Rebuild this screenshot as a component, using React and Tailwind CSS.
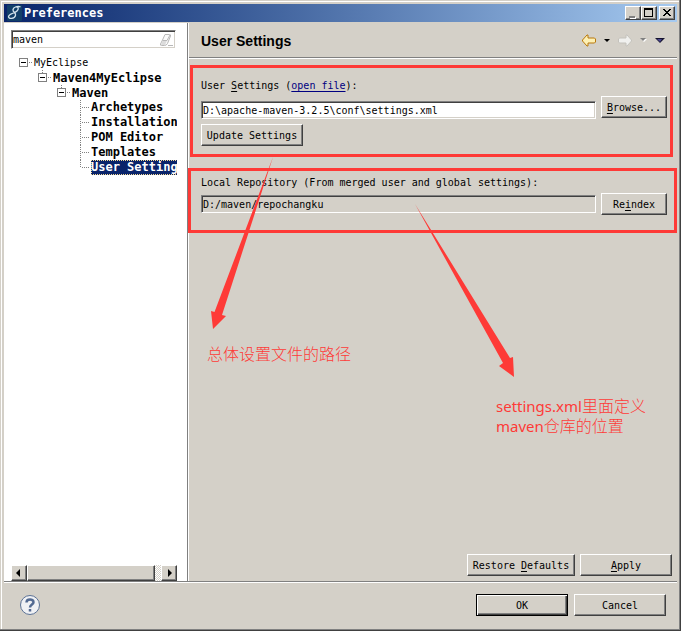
import { useState } from "react";

const leaves = ["Archetypes", "Installation", "POM Editor", "Templates", "User Setting"];

const raised =
    "border border-t-white border-l-white border-r-[#404040] border-b-[#404040] bg-[#d4d0c8] shadow-[inset_-1px_-1px_0_#808080]";
const sunken =
    "border border-t-[#808080] border-l-[#808080] border-r-white border-b-white shadow-[inset_1px_1px_0_#404040,inset_-1px_-1px_0_#d4d0c8]";

function Button({ className = "", children }) {
    return (
        <button type="button" className={`${raised} flex h-[22px] items-center justify-center whitespace-nowrap ${className}`}>
            <span>{children}</span>
        </button>
    );
}

function Expander({ open, root, label, onClick }) {
    return (
        <button type="button" aria-label={label} onClick={onClick} className="h-[15px] w-[15px] shrink-0">
            <svg width="15" height="15" shapeRendering="crispEdges" fill="none">
                {!root && <path d="M4.5 0v3" stroke="#808080" strokeDasharray="1 1" />}
                <rect x="0.5" y="3.5" width="8" height="8" stroke="#808080" fill="#fff" />
                <path d="M2 7.5h5" stroke="#000" />
                {!open && <path d="M4.5 5v5" stroke="#000" />}
                <path d="M10 7.5h4" stroke="#808080" strokeDasharray="1 1" />
            </svg>
        </button>
    );
}

function Branch({ label, root, children }) {
    const [open, setOpen] = useState(true);

    return (
        <li>
            <div className="flex h-[15px] items-center">
                <Expander open={open} root={root} label={`Toggle ${label}`} onClick={() => setOpen(!open)} />
                <span className={root ? "text-[10px] font-normal" : ""}>{label}</span>
            </div>
            {open && <ul className="ml-[19px]">{children}</ul>}
        </li>
    );
}

function Leaf({ label, last, selected, onSelect }) {
    return (
        <li className="flex h-[15px] items-center">
            <svg width="15" height="15" className="shrink-0" shapeRendering="crispEdges" fill="none" stroke="#808080">
                <path d={last ? "M4.5 0v8" : "M4.5 0v15"} strokeDasharray="1 1" />
                <path d="M6 7.5h7" strokeDasharray="1 1" />
            </svg>
            <button
                type="button"
                onClick={onSelect}
                className={`h-[15px] leading-[15px] ${
                    selected ? "bg-[#0a246a] text-white outline-1 -outline-offset-1 outline-dotted outline-[#f5db95]" : ""
                }`}
            >
                {label}
            </button>
        </li>
    );
}

function TitleBar() {
    return (
        <header className="flex h-[18px] items-center bg-linear-to-r from-[#0a246a] to-[#a6caf0] pr-[2px] pl-[3px]">
            <svg width="15" height="16" viewBox="0 0 15 16" fill="none">
                <rect width="15" height="16" rx="1" fill="#123f68" />
                <path
                    d="M13.500 2C11 0.500 6.500 2 6 4.500C5.500 7.500 9.500 7.500 8.500 10.500C7.500 14 1.500 14.500 1.500 11.500C2 8.500 7.500 8.500 10 6C12 4 11.500 1.500 9 2"
                    stroke="#d3e2ec"
                    strokeWidth="1.300"
                />
            </svg>
            <h1 className="ml-[2px] flex-1 text-xs font-bold text-white">Preferences</h1>
            <button type="button" aria-label="Minimize" className={`${raised} h-[14px] w-4`}>
                <svg width="14" height="12" shapeRendering="crispEdges">
                    <path d="M4 10h6v2H4z" fill="#fff" />
                    <path d="M3 9h6v2H3z" fill="#808080" />
                </svg>
            </button>
            <button type="button" aria-label="Maximize" className={`${raised} h-[14px] w-4`}>
                <svg width="14" height="12" shapeRendering="crispEdges" fill="none" stroke="#000">
                    <path d="M2.500 1.500h8v8h-8zM2.500 2.500h8" />
                </svg>
            </button>
            <button type="button" aria-label="Close" className={`${raised} ml-[2px] h-[14px] w-4`}>
                <svg width="14" height="12" shapeRendering="crispEdges" stroke="#000">
                    <path d="M3 2l7 7M4 2l7 7M10 2l-7 7M11 2l-7 7" />
                </svg>
            </button>
        </header>
    );
}

function Sidebar() {
    const [filter, setFilter] = useState("maven");
    const [selected, setSelected] = useState("User Setting");

    return (
        <aside className="flex w-[184px] shrink-0 flex-col border-r border-[#808080] bg-white pt-[7px] pr-[10px] pl-[7px]">
            <div className={`flex h-[19px] w-[165px] items-center bg-white pr-[2px] pl-px ${sunken}`}>
                <input
                    aria-label="Filter"
                    value={filter}
                    onChange={(e) => setFilter(e.target.value)}
                    className="w-0 flex-1 outline-none"
                />
                <button type="button" aria-label="Clear filter">
                    <svg width="14" height="14" fill="none" stroke="#b8b8b8">
                        <path d="M6 1.500h4.500q1.500 0 1 1.500L8.500 10.500q-1 2-3 2h-3q-1.500 0-1-1.500L3.500 7z" fill="#fafafa" />
                        <path d="M3.500 7.500h4.500l-2 4.500H2z" fill="#dcdcdc" stroke="none" />
                        <path d="M3.500 7.500h4.500l3-5.500M9 12.500h5" />
                    </svg>
                </button>
            </div>
            <nav className="mt-[6px] flex-1 overflow-hidden pl-2 text-xs font-bold whitespace-nowrap">
                <ul>
                    <Branch label="MyEclipse" root>
                        <Branch label="Maven4MyEclipse">
                            <Branch label="Maven">
                                {leaves.map((label, i) => (
                                    <Leaf
                                        key={label}
                                        label={label}
                                        last={i === leaves.length - 1}
                                        selected={selected === label}
                                        onSelect={() => setSelected(label)}
                                    />
                                ))}
                            </Branch>
                        </Branch>
                    </Branch>
                </ul>
            </nav>
            <div className="flex h-4 bg-[repeating-conic-gradient(#d4d0c8_0_25%,#fff_0_50%)] bg-[length:2px_2px]">
                <button type="button" aria-label="Scroll left" className={`${raised} w-4`}>
                    <svg width="14" height="14">
                        <path d="M8 3v8L4 7z" />
                    </svg>
                </button>
                <div className={`${raised} w-32`} />
                <button type="button" aria-label="Scroll right" className={`${raised} ml-auto w-4`}>
                    <svg width="14" height="14">
                        <path d="M6 3v8l4-4z" />
                    </svg>
                </button>
            </div>
        </aside>
    );
}

function PageHeader() {
    return (
        <div className="flex h-[36px] items-center border-b border-white pr-3 pl-3 shadow-[inset_0_-1px_0_#808080]">
            <h2 className="flex-1 font-['Liberation_Sans'] text-sm font-bold">User Settings</h2>
            <button type="button" aria-label="Back">
                <svg width="14" height="13" fill="#fdf0b4" stroke="#b8780c" strokeLinejoin="round">
                    <path d="M6 1v3h6.500l1 1v3l-1 1H6v3h-1L0.500 7V6L5 1z" />
                </svg>
            </button>
            <button type="button" aria-label="Back history" className="ml-2">
                <svg width="6" height="4">
                    <path d="M0 0h6L3 3z" />
                </svg>
            </button>
            <button type="button" aria-label="Forward" className="ml-2">
                <svg width="14" height="13" fill="#f0f0ee" stroke="#c4c2bc" strokeLinejoin="round">
                    <path d="M8 1v3H1.500l-1 1v3l1 1H8v3h1l4.500-5V6L9 1z" />
                </svg>
            </button>
            <button type="button" aria-label="Forward history" className="ml-2">
                <svg width="7" height="5">
                    <path d="M1 1h6L4 4z" fill="#fff" />
                    <path d="M0 0h6L3 3z" fill="#808080" />
                </svg>
            </button>
            <button type="button" aria-label="View menu" className="ml-2">
                <svg width="10" height="6">
                    <path d="M0 0h10L5 5z" fill="#14122e" />
                    <path d="M2 1h5L5 4z" fill="#4a4690" />
                </svg>
            </button>
        </div>
    );
}

function Settings() {
    const [path, setPath] = useState("D:\\apache-maven-3.2.5\\conf\\settings.xml");

    return (
        <main className="flex flex-1 flex-col border-l border-white">
            <PageHeader />
            <section className="relative mt-[6px] h-[92px] pt-[14px] pr-[10px] pl-3">
                <div className="absolute inset-y-0 right-1 left-px border-3 border-[#fe3a37]" />
                <div className="relative">
                    <label htmlFor="settings" className="block h-[17px] leading-[14px]">
                        User <u className="underline-offset-2">S</u>ettings (
                        <a href="#file" className="text-[#000080] underline underline-offset-2">open file</a>):
                    </label>
                    <div className="flex items-end gap-[5px]">
                        <input
                            id="settings"
                            value={path}
                            onChange={(e) => setPath(e.target.value)}
                            className={`h-[18px] w-0 flex-1 bg-white px-px outline-none ${sunken}`}
                        />
                        <Button className="mb-px w-[66px]"><u className="underline-offset-2">B</u>rowse...</Button>
                    </div>
                    <Button className="mt-[5px] w-[102px]">Update Settings</Button>
                </div>
            </section>
            <section className="relative mt-[11px] h-[65px] pt-2 pr-[10px] pl-3">
                <div className="absolute inset-y-0 right-0 -left-px border-3 border-[#fe3a37]" />
                <div className="relative">
                    <label htmlFor="repository" className="block h-[17px] leading-[14px]">
                        Local Repository (From merged user and global settings):
                    </label>
                    <div className="flex items-center gap-[5px]">
                        <input
                            id="repository"
                            readOnly
                            value="D:/maven/repochangku"
                            className={`h-[18px] w-0 flex-1 bg-[#d4d0c8] px-px outline-none ${sunken}`}
                        />
                        <Button className="w-[66px]">Re<u className="underline-offset-2">i</u>ndex</Button>
                    </div>
                </div>
            </section>
            <div className="mt-auto flex justify-end gap-[5px] pr-[5px] pb-[5px]">
                <Button className="w-[108px]">Restore <u className="underline-offset-2">D</u>efaults</Button>
                <Button className="w-[92px]"><u className="underline-offset-2">A</u>pply</Button>
            </div>
        </main>
    );
}

function Annotations() {
    return (
        <div className="pointer-events-none absolute inset-0 font-['Liberation_Sans','Noto_Sans_CJK_SC',sans-serif] text-base leading-5 font-light text-[#fe3a37]">
            <svg width="100%" height="100%" className="absolute inset-0" fill="#fe3a37">
                <path d="M273 157L222 315l4 1-13 13-2-18 3.500 1z" />
                <path d="M415 204l95 154 3-1 1 20-15-11 4-3z" />
            </svg>
            <p className="absolute top-[345px] left-[207px]">总体设置文件的路径</p>
            <p className="absolute top-[397px] left-[496px] whitespace-nowrap">
                <span className="font-['Noto_Sans'] text-[15px] leading-4 font-normal">settings.xml</span>里面定义
                <br />
                <span className="font-['Noto_Sans'] text-[15px] leading-4 font-normal">maven</span>仓库的位置
            </p>
        </div>
    );
}

export default function App() {
    return (
        <div className="relative flex min-h-screen flex-col border-r border-b border-[#404040] bg-[#d4d0c8] p-1 pr-[3px] pb-[3px] font-['DejaVu_Sans_Mono',monospace] text-[10px] text-black shadow-[inset_-1px_-1px_0_#808080,inset_1px_1px_0_#d4d0c8,inset_2px_2px_0_#fff]">
            <TitleBar />
            <div className="mt-px flex flex-1 border-b border-[#808080]">
                <Sidebar />
                <Settings />
            </div>
            <footer className="flex h-[45px] items-center gap-[6px] border-t border-white pr-[11px] pl-4">
                <button type="button" aria-label="Help" className="mr-auto">
                    <svg width="20" height="20" fill="none">
                        <circle cx="10" cy="10" r="9.500" fill="#f0f1f4" stroke="#5c7296" />
                        <path
                            d="M6.500 7.500C6.500 3.500 13.500 3.500 13.500 7.200C13.500 9.500 10 9.500 10 12.500M10 14v2.500"
                            stroke="#536a92"
                            strokeWidth="2.500"
                        />
                    </svg>
                </button>
                <button
                    type="button"
                    className="flex h-[22px] w-[92px] items-center justify-center border border-black shadow-[inset_1px_1px_0_#fff,inset_-1px_-1px_0_#404040,inset_-2px_-2px_0_#808080]"
                >
                    OK
                </button>
                <Button className="w-[92px]">Cancel</Button>
            </footer>
            <Annotations />
        </div>
    );
}
